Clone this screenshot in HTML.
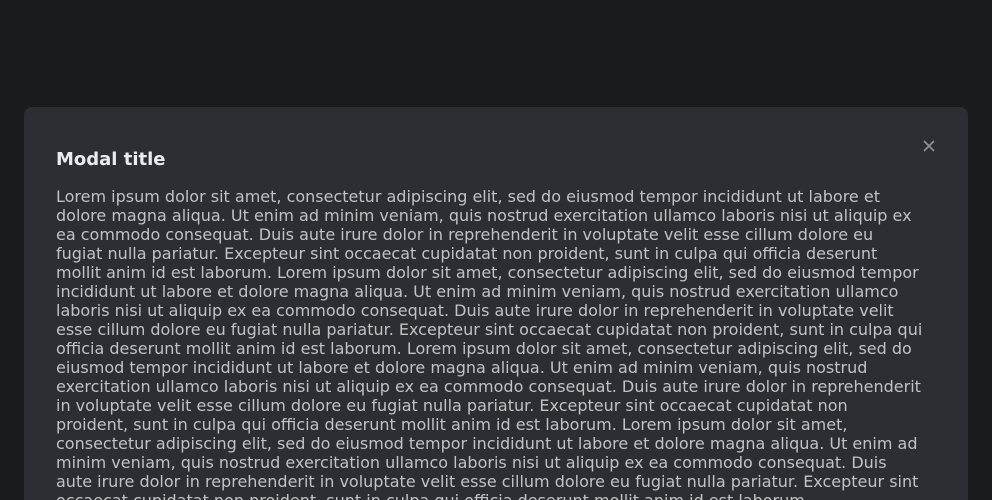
<!DOCTYPE html>
<html><head><style>
html,body{margin:0;padding:0;background:#1a1b1e;width:992px;height:500px;overflow:hidden;font-family:"DejaVu Sans","Liberation Sans",sans-serif;}
.modal{position:absolute;left:24px;top:107px;width:944px;height:393px;overflow:hidden;background:#2c2e33;border-radius:8px 8px 0 0;box-sizing:border-box;}
.t{position:absolute;left:32px;top:41px;color:#e9ecef;font-weight:bold;font-size:18px;line-height:24px;}
.x{position:absolute;left:899px;top:33px;}
p{position:absolute;left:32px;top:80px;width:868px;margin:0;color:#c1c2c5;font-size:16px;line-height:19px;}
</style></head><body>
<div class="modal">
<div class="t">Modal title</div>
<svg class="x" width="12" height="12" viewBox="0 0 12 12"><path d="M1 1L11 11M11 1L1 11" stroke="#909296" stroke-width="1.6"/></svg>
<p>Lorem ipsum dolor sit amet, consectetur adipiscing elit, sed do eiusmod tempor incididunt ut labore et dolore magna aliqua. Ut enim ad minim veniam, quis nostrud exercitation ullamco laboris nisi ut aliquip ex ea commodo consequat. Duis aute irure dolor in reprehenderit in voluptate velit esse cillum dolore eu fugiat nulla pariatur. Excepteur sint occaecat cupidatat non proident, sunt in culpa qui officia deserunt mollit anim id est laborum. Lorem ipsum dolor sit amet, consectetur adipiscing elit, sed do eiusmod tempor incididunt ut labore et dolore magna aliqua. Ut enim ad minim veniam, quis nostrud exercitation ullamco laboris nisi ut aliquip ex ea commodo consequat. Duis aute irure dolor in reprehenderit in voluptate velit esse cillum dolore eu fugiat nulla pariatur. Excepteur sint occaecat cupidatat non proident, sunt in culpa qui officia deserunt mollit anim id est laborum. Lorem ipsum dolor sit amet, consectetur adipiscing elit, sed do eiusmod tempor incididunt ut labore et dolore magna aliqua. Ut enim ad minim veniam, quis nostrud exercitation ullamco laboris nisi ut aliquip ex ea commodo consequat. Duis aute irure dolor in reprehenderit in voluptate velit esse cillum dolore eu fugiat nulla pariatur. Excepteur sint occaecat cupidatat non proident, sunt in culpa qui officia deserunt mollit anim id est laborum. Lorem ipsum dolor sit amet, consectetur adipiscing elit, sed do eiusmod tempor incididunt ut labore et dolore magna aliqua. Ut enim ad minim veniam, quis nostrud exercitation ullamco laboris nisi ut aliquip ex ea commodo consequat. Duis aute irure dolor in reprehenderit in voluptate velit esse cillum dolore eu fugiat nulla pariatur. Excepteur sint occaecat cupidatat non proident, sunt in culpa qui officia deserunt mollit anim id est laborum.</p>
</div>
</body></html>
